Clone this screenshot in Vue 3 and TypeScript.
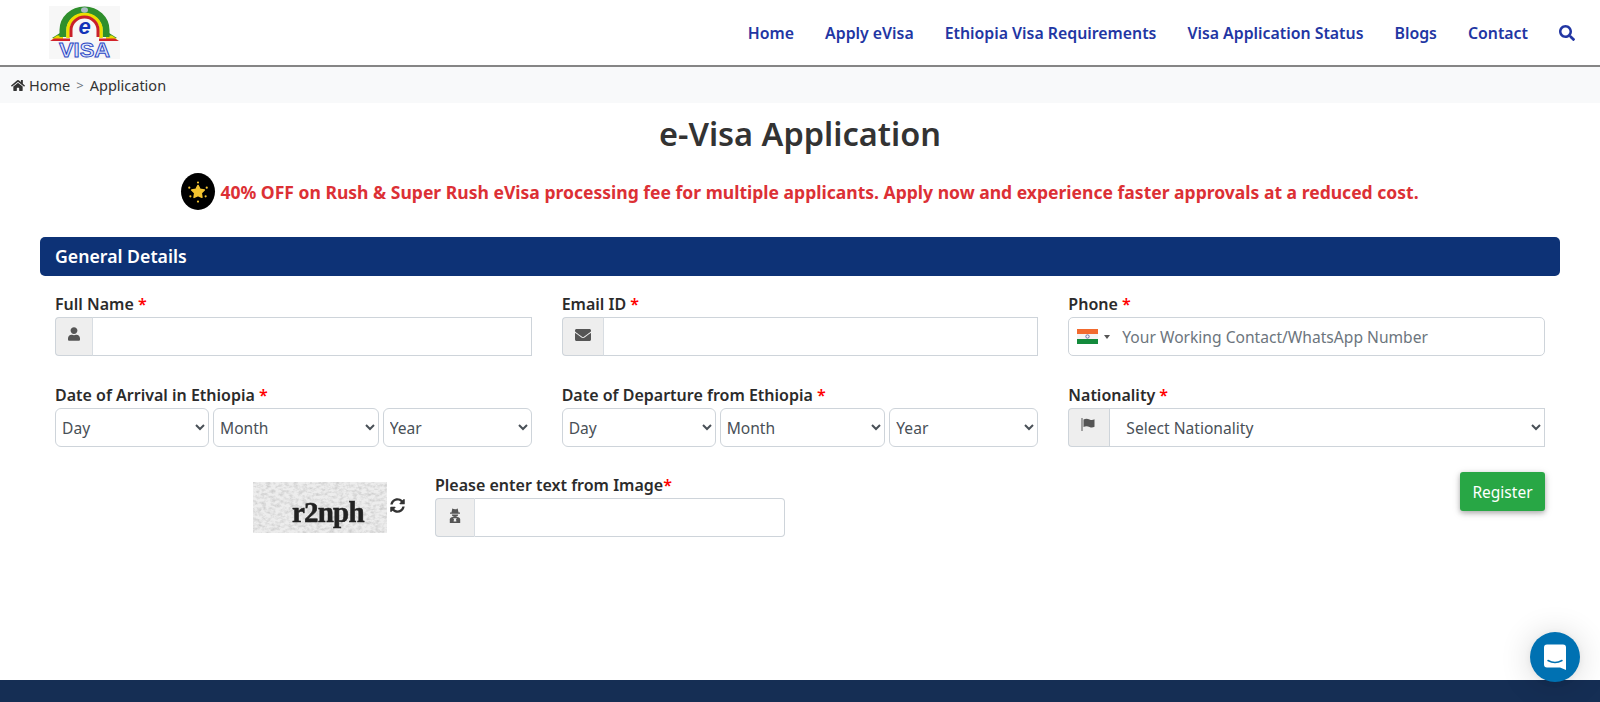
<template>
  <div class="page">
    <header class="topbar">
      <a class="logo" href="#">
        <svg width="71" height="56" viewBox="0 0 71 56">
          <rect width="71" height="53" fill="#f7f7f7" />
          <path d="M11 27 L3 32 H12 Z M60 27 L68 32 H59 Z" fill="#2f8f2c" />
          <path d="M8 29.500 L2.500 33.500 H14 V29.500 Z M63 29.500 L68.500 33.500 H57 V29.500 Z" fill="#e6d800" />
          <path d="M5 32.500 L1 35 H21 V32.500 Z M66 32.500 L70 35 H50 V32.500 Z" fill="#d2232a" />
          <path d="M14 31 V24 A21.500 20 0 0 1 57 24 V31" fill="none" stroke="#2f8f2c" stroke-width="7" />
          <path d="M19 32 V24 A16.500 15.500 0 0 1 52 24 V32" fill="none" stroke="#ecdf00" stroke-width="3.500" />
          <path d="M22 31 V24 A13.500 13 0 0 1 49 24 V31" fill="none" stroke="#c9202a" stroke-width="3" />
          <ellipse cx="35.500" cy="4" rx="3.500" ry="2.800" fill="#a9bcc4" />
          <text x="35.500" y="28" class="logo-e">e</text>
          <text x="10" y="50.500" textLength="51" lengthAdjust="spacingAndGlyphs" class="logo-visa">VISA</text>
        </svg>
      </a>
      <nav class="menu">
        <a v-for="item in menu" :key="item" href="#">{{ item }}</a>
        <a href="#" class="search" aria-label="Search">
          <svg width="16" height="16" viewBox="0 0 512 512"><path fill="currentColor" d="M505 442.7L405.3 343c-4.5-4.5-10.6-7-17-7H372c27.6-35.3 44-79.7 44-128C416 93.1 322.9 0 208 0S0 93.1 0 208s93.1 208 208 208c48.3 0 92.7-16.4 128-44v16.3c0 6.4 2.5 12.5 7 17l99.7 99.7c9.4 9.4 24.6 9.4 33.9 0l28.3-28.3c9.4-9.4 9.4-24.6.1-34zM208 336c-70.7 0-128-57.2-128-128 0-70.7 57.2-128 128-128 70.7 0 128 57.2 128 128 0 70.7-57.2 128-128 128z" /></svg>
        </a>
      </nav>
    </header>

    <div class="crumbs">
      <svg width="14" height="13" viewBox="0 0 576 512"><path fill="#333" d="M280.37 148.26L96 300.11V464a16 16 0 0 0 16 16l112.06-.29a16 16 0 0 0 15.92-16V368a16 16 0 0 1 16-16h64a16 16 0 0 1 16 16v95.64a16 16 0 0 0 16 16.05L464 480a16 16 0 0 0 16-16V300L295.67 148.26a12.19 12.19 0 0 0-15.3 0zM571.6 251.47L488 182.56V44.05a12 12 0 0 0-12-12h-56a12 12 0 0 0-12 12v72.61L318.47 43a48 48 0 0 0-61 0L4.34 251.47a12 12 0 0 0-1.6 16.9l25.5 31A12 12 0 0 0 45.15 301l235.22-193.74a12.19 12.19 0 0 1 15.3 0L530.9 301a12 12 0 0 0 16.9-1.6l25.5-31a12 12 0 0 0-1.7-16.93z" /></svg>
      <a href="#">Home</a>
      <span class="sep">&gt;</span>
      <span>Application</span>
    </div>

    <main class="content">
      <h1>e-Visa Application</h1>
      <div class="promo">
        <span class="promo-icon">
          <svg width="24" height="24" viewBox="0 0 22 22">
            <path fill="#f4c430" stroke="#f4c430" stroke-width="1.400" stroke-linejoin="round" d="M11 5l1.900 3.500 3.900.6-2.800 2.900.6 3.900-3.600-1.700-3.600 1.700.6-3.900-2.800-2.900 3.900-.6z" />
            <circle cx="11" cy="2.300" r="1" fill="#f4c430" />
            <circle cx="3" cy="7" r="1" fill="#f4c430" />
            <circle cx="19" cy="7" r="1" fill="#f4c430" />
            <circle cx="4" cy="15" r="1" fill="#f4c430" />
            <circle cx="18" cy="15" r="1" fill="#f4c430" />
            <circle cx="11" cy="19.800" r="1" fill="#f4c430" />
          </svg>
        </span>
        <span>40% OFF on Rush &amp; Super Rush eVisa processing fee for multiple applicants. Apply now and experience faster approvals at a reduced cost.</span>
      </div>

      <section>
        <h2 class="bar">General Details</h2>
        <div class="grid">
          <div class="field">
            <label>Full Name <em>*</em></label>
            <div class="group">
              <span class="addon addon-user">
                <svg width="12" height="14" viewBox="0 0 448 512"><path fill="#555" d="M224 256c70.7 0 128-57.3 128-128S294.7 0 224 0 96 57.3 96 128s57.3 128 128 128zm89.6 32h-16.7c-22.2 10.2-46.9 16-72.9 16s-50.6-5.8-72.9-16h-16.7C60.2 288 0 348.2 0 422.4V464c0 26.5 21.5 48 48 48h352c26.5 0 48-21.5 48-48v-41.6c0-74.2-60.2-134.4-134.4-134.4z" /></svg>
              </span>
              <input type="text" />
            </div>
          </div>
          <div class="field">
            <label>Email ID <em>*</em></label>
            <div class="group">
              <span class="addon addon-mail">
                <svg width="16" height="16" viewBox="0 0 512 512"><path fill="#555" d="M502.3 190.8c3.9-3.1 9.7-.2 9.7 4.7V400c0 26.5-21.5 48-48 48H48c-26.5 0-48-21.5-48-48V195.6c0-5 5.7-7.8 9.7-4.7 22.4 17.4 52.1 39.5 154.1 113.6 21.1 15.4 56.7 47.8 92.2 47.6 35.7.3 72-32.8 92.3-47.6 102-74.1 131.6-96.3 154-113.7zM256 320c23.2.4 56.6-29.2 73.4-41.4 132.7-96.3 142.8-104.7 173.4-128.7 5.8-4.5 9.2-11.5 9.2-18.9v-19c0-26.5-21.5-48-48-48H48C21.5 64 0 85.5 0 112v19c0 7.4 3.4 14.3 9.2 18.9 30.6 23.9 40.7 32.4 173.4 128.7 16.8 12.2 50.2 41.8 73.4 41.4z" /></svg>
              </span>
              <input type="text" />
            </div>
          </div>
          <div class="field">
            <label>Phone <em>*</em></label>
            <div class="phone">
              <svg class="flag" width="21" height="15" viewBox="0 0 21 15">
                <rect width="21" height="5" fill="#f26a2e" />
                <rect y="5" width="21" height="5" fill="#f4f4f4" />
                <rect y="10" width="21" height="5" fill="#138a3c" />
                <circle cx="10.5" cy="7.5" r="1.7" fill="none" stroke="#55559a" stroke-width="0.8" />
              </svg>
              <span class="caret"></span>
              <input type="text" placeholder="Your Working Contact/WhatsApp Number" />
            </div>
          </div>

          <div class="field">
            <label>Date of Arrival in Ethiopia <em>*</em></label>
            <div class="dates">
              <select v-for="d in dateParts" :key="d"><option>{{ d }}</option></select>
            </div>
          </div>
          <div class="field">
            <label>Date of Departure from Ethiopia <em>*</em></label>
            <div class="dates">
              <select v-for="d in dateParts" :key="d"><option>{{ d }}</option></select>
            </div>
          </div>
          <div class="field">
            <label>Nationality <em>*</em></label>
            <div class="group">
              <span class="addon addon-flag">
                <svg width="16" height="14" viewBox="0 0 16 14">
                  <path fill="#555" d="M0.5 0h1v13h-1z" />
                  <path fill="#555" d="M2.5 1.5c2-1 4-1 6 0s3.500 .6 5-.2v7.400c-1.500 .8-3 1.200-5 .2s-4-1-6 0z" />
                </svg>
              </span>
              <select class="nation"><option>Select Nationality</option></select>
            </div>
          </div>
        </div>

        <div class="last-row">
          <div class="captcha-img">
            <svg width="134" height="51" aria-hidden="true">
              <filter id="paper"><feTurbulence type="fractalNoise" baseFrequency="0.22 0.35" numOctaves="3" seed="4" /><feColorMatrix values="0 0 0 0 0.62  0 0 0 0 0.62  0 0 0 0 0.62  2.2 0 0 0 -0.85" /></filter>
              <rect width="134" height="51" fill="#ededed" />
              <rect width="134" height="51" filter="url(#paper)" />
            </svg>
            <span class="captcha-text">r2nph</span>
          </div>
          <a href="#" class="refresh" aria-label="Refresh">
            <svg width="15" height="15" viewBox="0 0 512 512"><path fill="#333" d="M370.72 133.28C339.458 104.008 298.888 87.962 255.848 88c-77.458.068-144.328 53.178-162.791 126.85-1.344 5.363-6.122 9.15-11.651 9.15H24.103c-7.498 0-13.194-6.807-11.807-14.176C33.933 94.924 134.813 8 256 8c66.448 0 126.791 26.136 171.315 68.685L463.03 40.97C478.149 25.851 504 36.559 504 57.941V192c0 13.255-10.745 24-24 24H345.941c-21.382 0-32.09-25.851-16.971-40.971l41.75-41.749zM32 296h134.059c21.382 0 32.09 25.851 16.971 40.971l-41.75 41.75c31.262 29.273 71.835 45.319 114.876 45.28 77.418-.07 144.315-53.144 162.787-126.849 1.344-5.363 6.122-9.15 11.651-9.15h57.304c7.498 0 13.194 6.807 11.807 14.176C478.067 417.076 377.187 504 256 504c-66.448 0-126.791-26.136-171.315-68.685L48.97 471.03C33.851 486.149 8 475.441 8 454.059V320c0-13.255 10.745-24 24-24z" /></svg>
          </a>
          <div class="field captcha-field">
            <label>Please enter text from Image<em>*</em></label>
            <div class="group round">
              <span class="addon addon-secret">
                <svg width="12" height="15" viewBox="0 0 12 15">
                  <path fill="#555" d="M3.300 0.500c1 .6 1.700 .8 2.700 .8s1.700-.2 2.700-.8L9.500 4.500H11v1.200H1V4.500h1.500z" />
                  <path fill="#555" d="M2.800 6.400h6.400c0 1.600-1.400 2.500-3.200 2.500S2.800 8 2.800 6.400z" />
                  <path fill="#555" d="M0.800 15v-3.500C.8 10 2 9 3.800 9h4.400c1.800 0 3 1 3 2.500V15z" />
                  <path fill="#eee" d="M4.200 10h1.300l.5 1 .5-1h1.300l-.8 1.200.4 2.300h-2.800l.4-2.300z" />
                </svg>
              </span>
              <input type="text" />
            </div>
          </div>
          <button class="register" type="button">Register</button>
        </div>
      </section>
    </main>

    <footer class="footer"></footer>

    <a href="#" class="chat" aria-label="Chat">
      <svg width="22" height="27" viewBox="0 0 22 27">
        <path fill="#fff" d="M3 0.500h16a3 3 0 0 1 3 3v22.500l-6-2.500H3a3 3 0 0 1-3-3v-17a3 3 0 0 1 3-3z" />
        <path fill="none" stroke="#0071b2" stroke-width="1.500" stroke-linecap="round" d="M4 16.500c4.500 2.500 9.500 2.500 14 0" />
      </svg>
    </a>
  </div>
</template>

<script setup lang="ts">
const menu: string[] = [
  'Home',
  'Apply eVisa',
  'Ethiopia Visa Requirements',
  'Visa Application Status',
  'Blogs',
  'Contact'
]
const dateParts: string[] = ['Day', 'Month', 'Year']
</script>

<style>
html, body { margin: 0; background: #fff; }
</style>

<style scoped>
* { box-sizing: border-box; }

.page {
  height: 702px;
  overflow: hidden;
  display: flex;
  flex-direction: column;
  position: relative;
  font-family: "Noto Sans", "Open Sans", sans-serif;
  color: #333;
}

a { text-decoration: none; color: inherit; }

.topbar {
  height: 67px;
  flex: none;
  display: flex;
  justify-content: space-between;
  align-items: flex-start;
  padding: 6px 25px 0 49px;
  border-bottom: 2px solid #858585;
}
.logo { display: block; height: 53px; }
.logo-e { font: italic 700 22px "Liberation Sans", sans-serif; fill: #1333b8; text-anchor: middle; }
.logo-visa { font: 700 20px "Liberation Sans", sans-serif; fill: #dfe6fb; stroke: #2a46c4; stroke-width: 0.9; }

.menu {
  display: flex;
  gap: 31px;
  margin-top: 16px;
  color: #2236a3;
  font-size: 15.85px;
  font-weight: 600;
  line-height: 22px;
}
.search { display: flex; align-items: center; }

.crumbs {
  height: 36px;
  flex: none;
  background: #f8f9fa;
  display: flex;
  align-items: center;
  gap: 4px;
  padding-left: 11px;
  font-size: 14.5px;
  color: #333;
}
.crumbs .sep { color: #6c757d; margin: 0 2px; font-size: 13px; }

.content { flex: 1; padding: 0 40px; }

h1 {
  margin: 9px 0 0;
  text-align: center;
  font-size: 32.5px;
  line-height: 44px;
  font-weight: 600;
  color: #333;
}

.promo {
  margin-top: 17px;
  height: 37px;
  display: flex;
  justify-content: center;
  align-items: center;
  gap: 5px;
  color: #dc3035;
  font-size: 17.55px;
  font-weight: 700;
}
.promo-icon {
  width: 34px;
  height: 37px;
  border-radius: 50%;
  background: #000;
  display: flex;
  align-items: center;
  justify-content: center;
}

.bar {
  margin: 27px 0 0;
  height: 39px;
  padding: 0 15px;
  border-radius: 5px;
  background: #0d3276;
  color: #fff;
  font-size: 17.7px;
  font-weight: 600;
  line-height: 39px;
}

.grid {
  display: grid;
  grid-template-columns: repeat(3, 1fr);
  column-gap: 30px;
  row-gap: 30px;
  padding: 19px 15px 0;
}

.field label {
  display: block;
  height: 22px;
  font-size: 16px;
  font-weight: 600;
  line-height: 19px;
  color: #2b2b2b;
}
.field em { color: #f00; font-style: normal; }

.group { display: flex; height: 39px; }
.addon {
  flex: none;
  height: 39px;
  background: #eee;
  border: 1px solid #ced4da;
  border-right: 0;
  border-radius: 4px 0 0 4px;
  display: flex;
  justify-content: center;
  padding-top: 9px;
}
.addon-user { width: 37px; }
.addon-mail { width: 41px; }
.addon-flag { width: 41px; }
.addon-secret { width: 39px; }

input, select {
  font-family: inherit;
  font-size: 15.6px;
  color: #495057;
  background-color: #fff;
  border: 1px solid #ced4da;
  outline: none;
}
.group input {
  flex: 1;
  min-width: 0;
  height: 39px;
  border-left-color: #d8dde2;
  padding: 0 12px;
}
.round input { border-radius: 0 4px 4px 0; }

.phone {
  height: 39px;
  display: flex;
  align-items: center;
  border: 1px solid #ced4da;
  border-radius: 5px;
  padding-left: 8px;
}
.flag { flex: none; margin-bottom: 1px; }
.caret {
  flex: none;
  width: 0;
  height: 0;
  margin-left: 6px;
  border: 3px solid transparent;
  border-top: 4px solid #555;
  border-bottom: 0;
}
.phone input {
  flex: 1;
  min-width: 0;
  height: 37px;
  border: 0;
  padding: 1px 0 0 12px;
  background: transparent;
}
.phone input::placeholder { color: #6c757d; opacity: 1; }

.dates {
  display: grid;
  grid-template-columns: 154px 1fr 149px;
  gap: 4px;
}
.dates select {
  width: 100%;
  height: 39px;
  border-radius: 6px;
  padding: 0 0 0 2px;
}
.nation {
  flex: 1;
  min-width: 0;
  height: 39px;
  padding-left: 12px;
}

.last-row {
  display: flex;
  align-items: flex-start;
  padding: 25px 15px 0 213px;
}
.captcha-img {
  position: relative;
  width: 134px;
  height: 51px;
  flex: none;
  margin-top: 10px;
}
.captcha-img svg { display: block; }
.captcha-text {
  position: absolute;
  left: 39px;
  top: 13px;
  font: 700 29px/34px "Liberation Serif", serif;
  letter-spacing: -0.8px;
  color: #222;
  -webkit-text-stroke: 0.5px #222;
  filter: blur(0.7px);
}
.refresh { flex: none; margin: 24px 0 0 3px; width: 45px; }
.captcha-field { width: 350px; flex: none; margin-top: 4px; }
.register {
  margin: 0 0 0 auto;
  flex: none;
  width: 85px;
  height: 39px;
  border: 0;
  border-radius: 3px;
  background: #28a745;
  color: #fff;
  font-family: inherit;
  font-size: 15.5px;
  box-shadow: 0 2px 5px rgba(0, 0, 0, 0.26), 0 2px 10px rgba(0, 0, 0, 0.12);
}

.footer {
  height: 22px;
  flex: none;
  background: #152e54;
}

.chat {
  position: absolute;
  left: 1530px;
  top: 632px;
  width: 50px;
  height: 50px;
  border-radius: 50%;
  background: #0071b2;
  display: flex;
  align-items: center;
  justify-content: center;
  box-shadow: 0 1px 6px rgba(0, 0, 0, 0.06), 0 2px 32px rgba(0, 0, 0, 0.16);
}
</style>
